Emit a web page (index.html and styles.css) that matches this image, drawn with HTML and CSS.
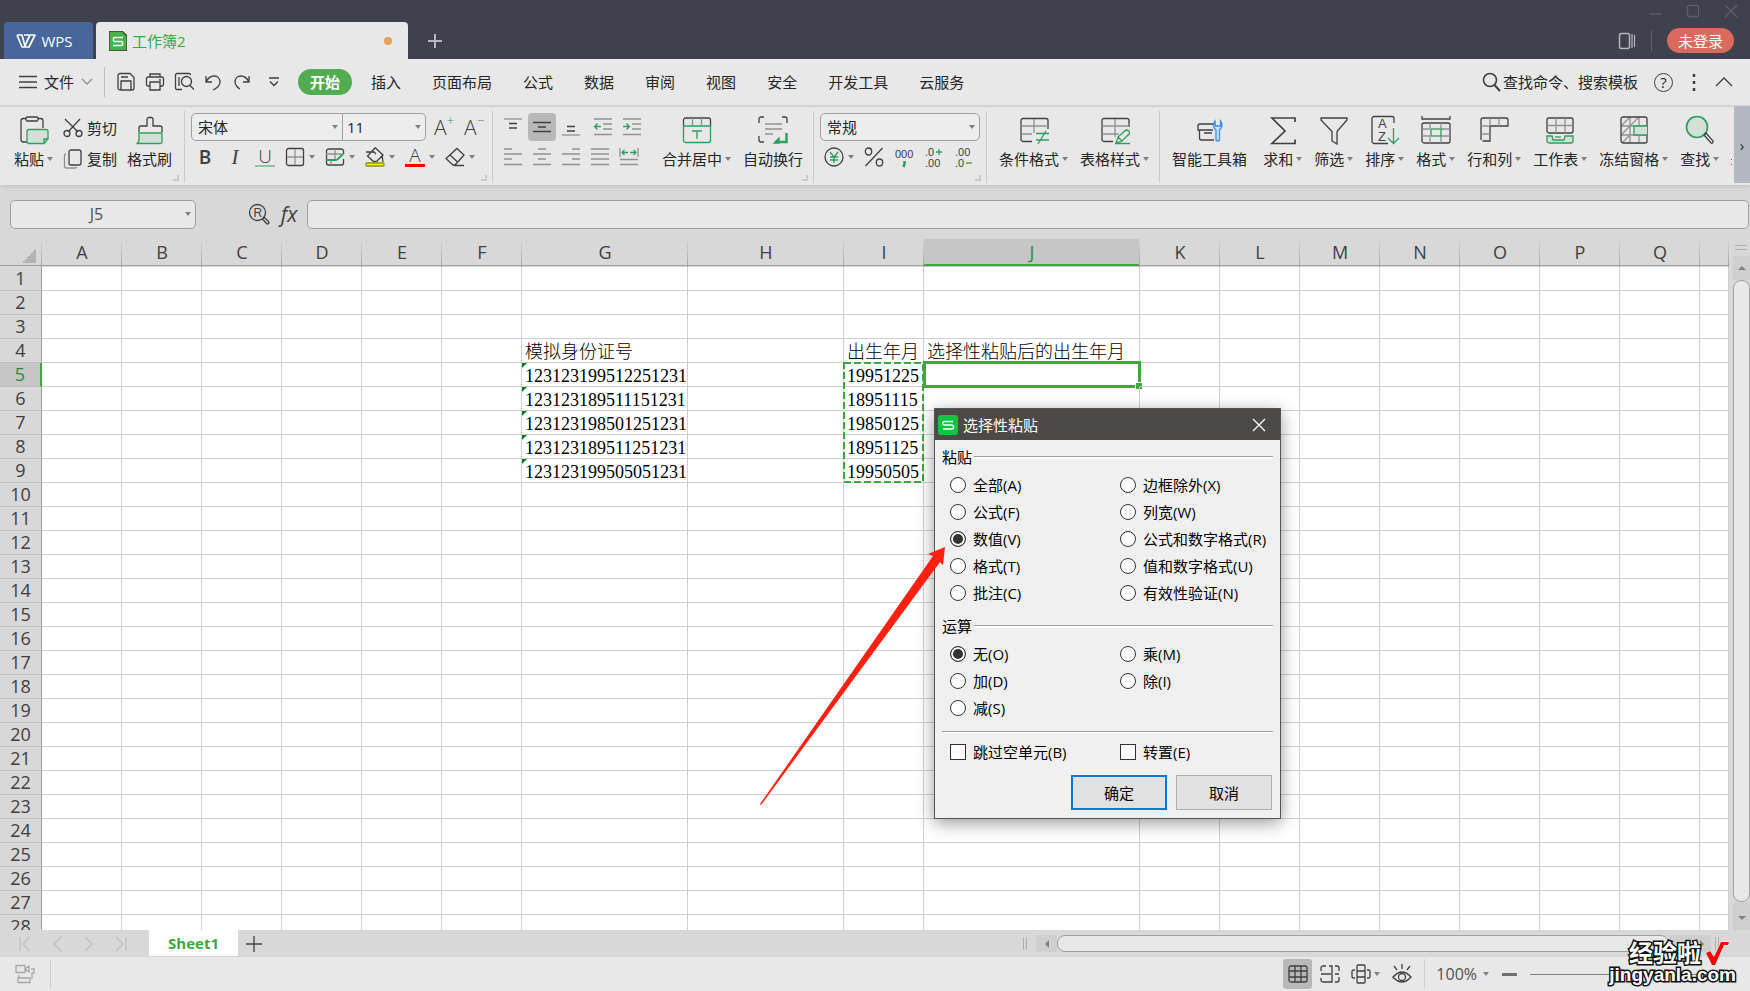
FILE: index.html
```
<!DOCTYPE html>
<html lang="zh-CN">
<head>
    <meta charset="UTF-8">
    <meta name="viewport" content="width=device-width, initial-scale=1.0">
    <title>工作簿2 - WPS</title>
    <link rel="stylesheet" href="styles.css">
</head>
<body>
    <header class="titlebar">
        <button class="wps-tab">
            <svg width="21" height="16" viewBox="0 0 21 16"><path d="M1 2h5l3 11 5-11h5l-6 12H6L1 2M8 2h6l-3 6" fill="none" stroke="#fff" stroke-width="1.700" stroke-linejoin="round"/></svg>
            WPS
        </button>
        <div class="doc-tab">
            <svg width="18" height="20" viewBox="0 0 18 20"><path d="M2 0h11l5 5v13a2 2 0 0 1-2 2H2a2 2 0 0 1-2-2V2a2 2 0 0 1 2-2z" fill="#48b148"/><path d="M14 6.500H5.500a1 1 0 0 0-1 1V9.500a1 1 0 0 0 1 1H12.500a1 1 0 0 1 1 1V13.500a1 1 0 0 1-1 1H4" fill="none" stroke="#fff" stroke-width="1.600"/></svg>
            <span>工作簿2</span>
            <i class="unsaved"></i>
        </div>
        <button class="new-tab" aria-label="新建"><svg width="16" height="16" viewBox="0 0 16 16"><path d="M8 1v14M1 8h14" stroke="#b4b6bc" stroke-width="2"/></svg></button>
        <div class="title-right">
            <div class="window-controls">
                <button aria-label="最小化"><svg width="14" height="14" viewBox="0 0 14 14"><path d="M1 10h12"/></svg></button>
                <button aria-label="最大化"><svg width="14" height="14" viewBox="0 0 14 14"><rect x="1.500" y="1.500" width="11" height="11" rx="1.500"/></svg></button>
                <button aria-label="关闭"><svg width="14" height="14" viewBox="0 0 14 14"><path d="M1 1l12 12M13 1L1 13"/></svg></button>
            </div>
            <div class="account">
                <button aria-label="窗口"><svg width="18" height="18" viewBox="0 0 18 18"><rect x="1.500" y="1.500" width="10" height="15" rx="2" fill="none" stroke="#b4b6bc" stroke-width="1.500"/><path d="M14 2v14M16.500 3v12" stroke="#b4b6bc" stroke-width="1.200"/></svg></button>
                <i class="account-line"></i>
                <button class="login">未登录</button>
            </div>
        </div>
    </header>

    <nav class="menubar">
        <button class="file-menu">
            <svg width="18" height="14" viewBox="0 0 18 14"><path d="M0 1.500h18M0 7h18M0 12.500h18"/></svg>
            文件
            <svg class="muted" width="12" height="8" viewBox="0 0 12 8"><path d="M1 1l5 5 5-5"/></svg>
        </button>
        <div class="quick">
            <button aria-label="保存"><svg width="20" height="20" viewBox="0 0 20 20"><path d="M4 1.500h10l4 4V16a2 2 0 0 1-2 2H4a2 2 0 0 1-2-2V3.500a2 2 0 0 1 2-2zM5 18v-9h10v9M5 5h7"/></svg></button>
            <button aria-label="打印"><svg width="20" height="20" viewBox="0 0 20 20"><path d="M5 5V2h10v3M5 14H3a1.500 1.500 0 0 1-1.500-1.500v-6A1.500 1.500 0 0 1 3 5h14a1.500 1.500 0 0 1 1.500 1.500v6A1.500 1.500 0 0 1 17 14h-2M5 10h10v8H5zM14 8h2"/></svg></button>
            <button aria-label="打印预览"><svg width="20" height="20" viewBox="0 0 20 20"><path d="M8 17.500H3a1.500 1.500 0 0 1-1.500-1.500V3A1.500 1.500 0 0 1 3 1.500h12A1.500 1.500 0 0 1 16.500 3M5 14V5M16 13.500l4 4"/><circle cx="12.500" cy="9.500" r="5"/></svg></button>
            <button aria-label="撤销"><svg width="20" height="20" viewBox="0 0 20 20"><path d="M3 4v6h6M3 10c2-4 5-6 8-6 4 0 6 3 6 6 0 3-3 6-7 8"/></svg></button>
            <button aria-label="恢复"><svg width="20" height="20" viewBox="0 0 20 20"><path d="M17 4v6h-6M17 10c-2-4-5-6-8-6-4 0-6 3-6 6 0 3 3 6 5 7"/></svg></button>
            <button aria-label="更多"><svg width="12" height="10" viewBox="0 0 12 10"><path d="M1 1h10M2 4.500l4 4 4-4"/></svg></button>
        </div>
        <div class="tabs">
            <button class="active">开始</button>
            <button>插入</button>
            <button>页面布局</button>
            <button>公式</button>
            <button>数据</button>
            <button>审阅</button>
            <button>视图</button>
            <button>安全</button>
            <button>开发工具</button>
            <button>云服务</button>
        </div>
        <div class="menu-right">
            <button class="search"><svg width="20" height="20" viewBox="0 0 20 20"><circle cx="9" cy="8" r="6.500" stroke-width="1.600"/><path d="M13.500 13l5.500 6" stroke-width="2"/></svg>查找命令、搜索模板</button>
            <button class="help" aria-label="帮助">?</button>
            <button class="more" aria-label="更多"><svg width="4" height="18" viewBox="0 0 4 18"><path d="M2 1v3M2 8v3M2 15v3" stroke-width="2.500"/></svg></button>
            <button class="collapse" aria-label="收起"><svg width="18" height="10" viewBox="0 0 18 10"><path d="M1 9l8-8 8 8"/></svg></button>
        </div>
    </nav>

    <section class="ribbon">
        <div class="group clipboard">
            <button class="big">
                <svg width="30" height="30" viewBox="0 0 30 30"><path d="M8 27H4.500A2.500 2.500 0 0 1 2 24.500V6a2.500 2.500 0 0 1 2.500-2.500H7M19 3.500h2.500A2.500 2.500 0 0 1 24 6v7"/><rect x="7" y="2" width="12" height="4" rx="1.500"/><path class="green tint" d="M10 14.500h17a2 2 0 0 1 2 2V24l-4 4.500H10a2 2 0 0 1-2-2v-10a2 2 0 0 1 2-2z"/><path class="green" d="M29 24h-4v4"/></svg>
                <span class="caret">粘贴</span>
            </button>
            <div class="stack">
                <button><svg width="20" height="20" viewBox="0 0 20 20"><path d="M2 1l13 13M17 1L5 14"/><circle cx="4" cy="15.500" r="3"/><circle cx="16" cy="15.500" r="3"/></svg>剪切</button>
                <button><svg width="20" height="20" viewBox="0 0 20 20"><rect x="6" y="1" width="12" height="15" rx="2"/><path class="muted" d="M3 4.500a2 2 0 0 0-1.500 2V17a2 2 0 0 0 2 2H12a2 2 0 0 0 2-1"/></svg>复制</button>
            </div>
            <button class="big">
                <svg width="30" height="30" viewBox="0 0 30 30"><path d="M4 17v-4a2 2 0 0 1 2-2h6V4.500a2 2 0 0 1 2-2h2a2 2 0 0 1 2 2V11h7a2 2 0 0 1 2 2v4"/><path class="green tint" d="M4 18h23v9a1.500 1.500 0 0 1-1.500 1.500H1.500Q4 28 4 25z"/></svg>
                <span>格式刷</span>
            </button>
            <i class="corner"></i>
        </div>

        <div class="group font">
            <div class="rows">
                <div class="row">
                    <div class="font-boxes">
                        <label class="combo name"><select aria-label="字体"><option>宋体</option></select></label>
                        <label class="combo size"><select aria-label="字号"><option>11</option></select></label>
                    </div>
                    <button class="glyph grow" aria-label="增大字号">A<sup>+</sup></button>
                    <button class="glyph grow" aria-label="减小字号">A<sup>−</sup></button>
                </div>
                <div class="row tools">
                    <button class="glyph bold">B</button>
                    <button class="glyph italic">I</button>
                    <button class="glyph underline">U</button>
                    <button class="caret" aria-label="边框"><svg width="20" height="20" viewBox="0 0 20 20"><rect x="1.500" y="1.500" width="17" height="17" rx="2"/><path class="muted" d="M10 2v16M2 10h16"/></svg></button>
                    <button class="caret" aria-label="绘图边框"><svg width="20" height="20" viewBox="0 0 20 20"><path d="M18.500 6V4a2 2 0 0 0-2-2h-13a2 2 0 0 0-2 2v12a2 2 0 0 0 2 2h13a2 2 0 0 0 2-2v-4"/><path class="muted" d="M1 7h15M10 2v10M6 14v4"/><path class="green" d="M1 13h10l2-1 6-6" stroke-width="1.800"/></svg></button>
                    <button class="caret" aria-label="填充颜色"><svg width="20" height="20" viewBox="0 0 20 20"><path d="M10 1L2.500 9l6 5.500h3L18 8l-7.500-7zM1 5h8l2 2M17 8l1 7"/><rect x="1" y="16" width="18" height="3" rx="1" fill="#ff0" stroke="#8a8a2a"/></svg></button>
                    <button class="glyph color caret"><span>A</span></button>
                    <button class="caret" aria-label="清除"><svg width="20" height="20" viewBox="0 0 20 20"><path d="M12 1.500l7 6.500-9 10H8l-7-6.500zM5 8l7.500 7M9 18.500h10"/></svg></button>
                </div>
            </div>
            <i class="corner"></i>
        </div>

        <div class="group align">
            <div class="rows">
                <div class="row">
                    <button aria-label="顶端对齐"><svg width="20" height="20" viewBox="0 0 20 20"><path class="muted" d="M1 2h18"/><path d="M6 6.500h8M6 11h8"/></svg></button>
                    <button class="pressed" aria-label="垂直居中"><svg width="20" height="20" viewBox="0 0 20 20"><path d="M1 5.500h18M6 10h8M1 14.500h18"/></svg></button>
                    <button aria-label="底端对齐"><svg width="20" height="20" viewBox="0 0 20 20"><path d="M6 9.500h8M6 14h8"/><path class="muted" d="M1 18h18"/></svg></button>
                    <button class="indent" aria-label="减少缩进"><svg width="20" height="20" viewBox="0 0 20 20"><path class="muted" d="M1 2h18M10 7h9M10 12h9M1 17.500h18"/><path class="green" d="M8 9.500H2M4.500 6.500l-3 3 3 3"/></svg></button>
                    <button aria-label="增加缩进"><svg width="20" height="20" viewBox="0 0 20 20"><path class="muted" d="M1 2h18M10 7h9M10 12h9M1 17.500h18"/><path class="green" d="M1 9.500h6M4.500 6.500l3 3-3 3"/></svg></button>
                </div>
                <div class="row muted">
                    <button aria-label="左对齐"><svg width="20" height="20" viewBox="0 0 20 20"><path d="M1 2h8M1 7h18M1 12h8M1 17.500h18"/></svg></button>
                    <button aria-label="居中"><svg width="20" height="20" viewBox="0 0 20 20"><path d="M6 2h8M1 7h18M6 12h8M1 17.500h18"/></svg></button>
                    <button aria-label="右对齐"><svg width="20" height="20" viewBox="0 0 20 20"><path d="M11 2h8M1 7h18M11 12h8M1 17.500h18"/></svg></button>
                    <button aria-label="两端对齐"><svg width="20" height="20" viewBox="0 0 20 20"><path d="M1 2h18M1 7h18M1 12h18M1 17.500h18"/></svg></button>
                    <button aria-label="分散对齐"><svg width="20" height="20" viewBox="0 0 20 20"><path d="M1 1v9M19 1v9M1 12.500h18M1 17.500h18"/><path class="green" d="M9 5.500H3M5.500 3L3 5.500 5.500 8M11 5.500h6M14.500 3L17 5.500 14.500 8"/></svg></button>
                </div>
            </div>
            <button class="big">
                <svg width="30" height="30" viewBox="0 0 30 30"><path d="M1.500 11V5a2 2 0 0 1 2-2h23a2 2 0 0 1 2 2v6"/><path class="muted" d="M10.500 3v7M19.500 3v7"/><path class="green" d="M1.500 11h27v14.500a2 2 0 0 1-2 2h-23a2 2 0 0 1-2-2zM10 16h10M15 16v8"/></svg>
                <span class="caret">合并居中</span>
            </button>
            <button class="big">
                <svg width="30" height="30" viewBox="0 0 30 30"><path d="M1 8V4a2 2 0 0 1 2-2h3M24 2h3a2 2 0 0 1 2 2v4M1 21v4a2 2 0 0 0 2 2h3"/><path class="muted" d="M7 9h17M7 14h17M7 19h8"/><path class="green" d="M28.500 18v9H18" stroke-width="2.500"/><path class="green fill" d="M21 23v5h-5z"/></svg>
                <span>自动换行</span>
            </button>
            <i class="corner"></i>
        </div>

        <div class="group number">
            <div class="rows">
                <div class="row"><label class="combo format"><select aria-label="数字格式"><option>常规</option></select></label></div>
                <div class="row tools">
                    <button class="caret" aria-label="货币"><svg width="20" height="20" viewBox="0 0 20 20"><circle cx="10" cy="10" r="9"/><path class="green" d="M6 5l4 5 4-5M10 10v6M6 10h8M6 13h8"/></svg></button>
                    <button aria-label="百分比"><svg width="20" height="20" viewBox="0 0 20 20"><ellipse cx="4.500" cy="4.500" rx="3.200" ry="3.500"/><ellipse cx="15.500" cy="15.500" rx="3.200" ry="3.500"/><path d="M18.500 1L1.500 19"/></svg></button>
                    <button aria-label="千位分隔"><svg width="20" height="22" viewBox="0 0 20 22"><text x="1" y="12">000</text><path class="green" d="M10.500 15v3l-1 3" stroke-width="2.500"/></svg></button>
                    <button aria-label="增加小数位"><svg width="20" height="22" viewBox="0 0 20 22"><text x="1" y="10">.0</text><text x="1" y="21">.00</text><path class="green" d="M12 6h6M15 3v6"/></svg></button>
                    <button aria-label="减少小数位"><svg width="20" height="22" viewBox="0 0 20 22"><text x="1" y="10">.00</text><text x="1" y="21">.0</text><path class="green" d="M12 17h6"/></svg></button>
                </div>
            </div>
            <i class="corner"></i>
        </div>

        <div class="group style">
            <button class="big">
                <svg width="30" height="30" viewBox="0 0 30 30"><path d="M13 26.500H4a2 2 0 0 1-2-2V5.500a2 2 0 0 1 2-2h23a2 2 0 0 1 2 2V14"/><path class="muted" d="M2 11h27M15 4v14M2 19h11"/><path class="green" d="M17 18.500h13M17 25h13M27 16l-8 13"/></svg>
                <span class="caret">条件格式</span>
            </button>
            <button class="big">
                <svg width="30" height="30" viewBox="0 0 30 30"><path d="M13 26.500H4a2 2 0 0 1-2-2V5.500a2 2 0 0 1 2-2h23a2 2 0 0 1 2 2V12"/><path class="muted" d="M2 11h27M15 4v18M2 19h17"/><path class="green" d="M15 28.500h15M16 28l2-6 8-7q3 0 4 3l-8 8zM18 22l4 4"/></svg>
                <span class="caret">表格样式</span>
            </button>
        </div>

        <div class="group last">
            <button class="big tool">
                <svg width="30" height="30" viewBox="0 0 30 30"><path d="M18 9H5a2 2 0 0 0-2 2v4h15M4.500 15v8a2 2 0 0 0 2 2H19M9 18h8"/><path class="blue" d="M20 6q-3 4 0 8l1 1v10q1.500 2 3.500 0V15l1-1q3-4 0-8v5h-5z"/></svg>
                <span>智能工具箱</span>
            </button>
            <button class="big"><svg width="30" height="30" viewBox="0 0 30 30"><path d="M27 7V3H4l13 13L4 28.500h23v-4" stroke-width="1.700"/></svg><span class="caret">求和</span></button>
            <button class="big"><svg width="30" height="30" viewBox="0 0 30 30"><path d="M2 3h26v2L18 16.500V29l-5-3v-9.500L2 5z"/></svg><span class="caret">筛选</span></button>
            <button class="big"><svg width="30" height="30" viewBox="0 0 30 30"><path d="M18 28.500H4a2 2 0 0 1-2-2v-23a2 2 0 0 1 2-2h18a2 2 0 0 1 2 2V8"/><text x="8" y="13" class="az">A</text><text x="8" y="26" class="az">Z</text><path class="green" d="M23.500 13v15M18 23l5.500 5.500L29 23"/></svg><span class="caret">排序</span></button>
            <button class="big"><svg width="30" height="30" viewBox="0 0 30 30"><path d="M1 1v3h28V1"/><rect x="1" y="8" width="28" height="20" rx="2"/><path class="muted" d="M1 14h8M1 21h8M20 14h9M20 21h9M9 8v5M20 8v5M9 22v6M20 22v6"/><rect class="green" x="10" y="14" width="10" height="7"/></svg><span class="caret">格式</span></button>
            <button class="big"><svg width="30" height="30" viewBox="0 0 30 30"><path d="M2 25V5a2 2 0 0 1 2-2h23a2 2 0 0 1 2 2v6H11v15H3.500"/><path class="muted" d="M11 3v8M20 3v8M2 11h9M2 19h9"/></svg><span class="caret">行和列</span></button>
            <button class="big"><svg width="30" height="30" viewBox="0 0 30 30"><rect x="2" y="3" width="26" height="15" rx="2"/><path class="muted" d="M2 10.500h26M11 3v15M20 3v15"/><path class="green tint" d="M2 21h5l1 4h11l1-4h8v5a2 2 0 0 1-2 2H4a2 2 0 0 1-2-2z"/><path class="green" d="M10 22h6"/></svg><span class="caret">工作表</span></button>
            <button class="big"><svg width="30" height="30" viewBox="0 0 30 30"><path class="muted" d="M11 2v26M20 2v26M2 11h26M2 20h26M3 10l7-7M12 10l7-7M3 19l7-7M3 28l7-7"/><rect x="2" y="2" width="26" height="26" rx="2"/><path class="green tint" d="M28 11H15v9h13"/></svg><span class="caret">冻结窗格</span></button>
            <button class="big"><svg width="30" height="30" viewBox="0 0 30 30"><circle class="green tint" cx="12" cy="12" r="10.500" stroke-width="1.700"/><path d="M19 20l2-2 7 8a1.500 1.500 0 0 1-2 2z"/></svg><span class="caret">查找</span></button>
        </div>
        <i class="cut-label"></i>
        <button class="scroll-right" aria-label="更多">›</button>
    </section>

    <section class="formula-bar">
        <label class="combo cell-name"><input type="text" value="J5" aria-label="名称框"></label>
        <button class="lookup" aria-label="查找"><svg width="22" height="22" viewBox="0 0 22 22"><circle cx="9.500" cy="9.500" r="8"/><text x="5.500" y="14" class="reg">R</text><path d="M14.500 16l2-1.500 4 4a1.200 1.200 0 0 1-2 2z"/></svg></button>
        <button class="fx">fx</button>
        <input class="formula" type="text" aria-label="编辑栏">
    </section>

    <main class="sheet">
        <div class="grid">
            <table>
                <colgroup>
                    <col class="c-head"><col><col><col><col><col><col><col class="c-g"><col class="c-h"><col><col class="c-j"><col><col><col><col><col><col><col><col class="c-rest">
                </colgroup>
                <thead><tr id="columns"></tr></thead>
                <tbody id="rows"></tbody>
            </table>
        </div>
        <div class="vscroll">
            <i class="split"></i>
            <button class="up" aria-label="向上"></button>
            <div class="thumb"></div>
            <button class="down" aria-label="向下"></button>
        </div>

        <svg class="arrow" width="188" height="260" viewBox="0 0 188 260"><path d="M1 257L174 9l-5-2 17-7-2 18-3-3L2 258z" fill="#ff2010"/></svg>

        <form class="dialog">
            <div class="dialog-title">
                <svg width="20" height="20" viewBox="0 0 20 20"><rect width="20" height="20" rx="3" fill="#0fc542"/><path d="M15 6.500H6.500a1.500 1.500 0 0 0 0 3.500H13.500a1.500 1.500 0 0 1 0 4H5" fill="none" stroke="#fff" stroke-width="1.500"/></svg>
                <h1>选择性粘贴</h1>
                <button type="button" aria-label="关闭"><svg width="14" height="14" viewBox="0 0 14 14"><path d="M1 1l12 12M13 1L1 13" stroke="#fff" stroke-width="1.300"/></svg></button>
            </div>
            <div class="dialog-body">
                <h2>粘贴</h2>
                <div class="options">
                    <label><input type="radio" name="paste">全部(A)</label>
                    <label><input type="radio" name="paste">边框除外(X)</label>
                    <label><input type="radio" name="paste">公式(F)</label>
                    <label><input type="radio" name="paste">列宽(W)</label>
                    <label><input type="radio" name="paste" checked>数值(V)</label>
                    <label><input type="radio" name="paste">公式和数字格式(R)</label>
                    <label><input type="radio" name="paste">格式(T)</label>
                    <label><input type="radio" name="paste">值和数字格式(U)</label>
                    <label><input type="radio" name="paste">批注(C)</label>
                    <label><input type="radio" name="paste">有效性验证(N)</label>
                </div>
                <h2>运算</h2>
                <div class="options">
                    <label><input type="radio" name="op" checked>无(O)</label>
                    <label><input type="radio" name="op">乘(M)</label>
                    <label><input type="radio" name="op">加(D)</label>
                    <label><input type="radio" name="op">除(I)</label>
                    <label><input type="radio" name="op">减(S)</label>
                </div>
                <hr>
                <div class="options">
                    <label><input type="checkbox">跳过空单元(B)</label>
                    <label><input type="checkbox">转置(E)</label>
                </div>
                <div class="dialog-buttons">
                    <button type="button" class="ok">确定</button>
                    <button type="button">取消</button>
                </div>
            </div>
        </form>
    </main>

    <section class="sheet-bar">
        <div class="sheet-nav">
            <button aria-label="第一个"><svg width="14" height="16" viewBox="0 0 14 16"><path d="M2 1v14M12 1L5 8l7 7"/></svg></button>
            <button aria-label="上一个"><svg width="14" height="16" viewBox="0 0 14 16"><path d="M11 1L4 8l7 7"/></svg></button>
            <button aria-label="下一个"><svg width="14" height="16" viewBox="0 0 14 16"><path d="M3 1l7 7-7 7"/></svg></button>
            <button aria-label="最后一个"><svg width="14" height="16" viewBox="0 0 14 16"><path d="M2 1l7 7-7 7M12 1v14"/></svg></button>
        </div>
        <button class="sheet-tab">Sheet1</button>
        <button class="add-sheet" aria-label="新建工作表"><svg width="18" height="18" viewBox="0 0 18 18"><path d="M9 1v16M1 9h16"/></svg></button>
        <div class="hscroll">
            <i class="split"></i>
            <button class="left" aria-label="向左"></button>
            <div class="thumb"></div>
            <button class="right" aria-label="向右"></button>
            <i class="split"></i>
        </div>
    </section>

    <footer class="status">
        <button class="record" aria-label="录制"><svg width="22" height="20" viewBox="0 0 22 20"><path d="M2 1.500h9v7H2zM11 5l4-3v6zM4 14h12v4.500H4zM5 14v-3M17 5h3v4h-2v6"/></svg></button>
        <div class="views">
            <button class="pressed" aria-label="普通视图"><svg width="20" height="20" viewBox="0 0 20 20"><rect x="1" y="2" width="18" height="16" rx="2"/><path d="M7 2v16M13 2v16M1 7h18M1 13h18"/></svg></button>
            <button aria-label="分页预览"><svg width="20" height="20" viewBox="0 0 20 20"><path d="M1 7V4a2 2 0 0 1 2-2h3M9 2h3v16H3a2 2 0 0 1-2-2v-2M1 10h10M15 2h2a2 2 0 0 1 2 2v3M15 10h4M15 18h2a2 2 0 0 0 2-2v-3"/></svg></button>
            <button class="caret" aria-label="阅读模式"><svg width="20" height="20" viewBox="0 0 20 20"><rect x="6" y="1" width="8" height="18" rx="1"/><path d="M4 6H2.500A1.500 1.500 0 0 0 1 7.500v5A1.500 1.500 0 0 0 2.500 14H4M16 6h1.500A1.500 1.500 0 0 1 19 7.500v5a1.500 1.500 0 0 1-1.500 1.500H16M6 7h8M6 13h8"/></svg></button>
            <button aria-label="护眼模式"><svg width="20" height="20" viewBox="0 0 20 20"><path d="M1 13q9-10 18 0-9 10-18 0zM10 0v5M2 2l3 4M18 2l-3 4"/><circle cx="10" cy="13" r="3.500"/></svg></button>
        </div>
        <button class="zoom-value caret">100%</button>
        <button class="zoom-out" aria-label="缩小"></button>
        <input class="zoom-range" type="range" min="0" max="100" value="50" aria-label="缩放">
        <button class="zoom-in" aria-label="放大"></button>
    </footer>

    <div class="watermark">
        <div class="mark-name">经验啦<svg width="24" height="24" viewBox="0 0 24 24"><path d="M1 12l4-2 4 6L16 1h8l-1 3h-4L10 24H7z"/></svg></div>
        <div class="mark-url">jingyanla.com</div>
    </div>

    <script src="script.js"></script>
</body>
</html>
```
FILE: styles.css
```
:root {
    --bar: #e8e8e8;
    --frame: #d8d8d8;
    --line: #d0d0d0;
    --edge: #a0a0a0;
    --ink: #404040;
    --green: #2e9e5e;
    --accent: #3fa740;
    --ui: "Open Sans", "Noto Sans CJK SC", sans-serif;
}

* {
    box-sizing: border-box;
}

body {
    margin: 0;
    height: 100vh;
    display: flex;
    flex-direction: column;
    overflow: hidden;
    background: var(--frame);
    color: #262626;
    font: 15px/20px var(--ui);
}

button, input, select {
    margin: 0;
    padding: 0;
    border: 0;
    background: none;
    color: inherit;
    font: inherit;
}

button {
    display: flex;
    align-items: center;
    justify-content: center;
    white-space: nowrap;
}

svg {
    flex: none;
    display: block;
    fill: none;
    stroke: var(--ink);
    stroke-width: 1.3;
}

svg text {
    fill: var(--ink);
    stroke: none;
    font: 11px/11px "Liberation Sans", sans-serif;
}

svg .az { font-size: 13px; }
svg .reg { font-size: 12px; }

.muted, .muted svg { stroke: #919191; }
svg .green { stroke: var(--green); }
svg .tint { fill: #d3e0d8; }
svg .fill { fill: var(--green); }
svg .blue { stroke: #3a8fe6; fill: #cfe2f5; }

/* small drop-down triangle after a control */
.caret::after, .combo::after {
    content: "";
    display: inline-block;
    flex: none;
    border: 3px solid transparent;
    border-top: 4px solid #808080;
    border-bottom: 0;
    margin-left: 3px;
    vertical-align: 4px;
}

/* title bar */
.titlebar {
    flex: none;
    height: 59px;
    display: flex;
    align-items: flex-end;
    padding-left: 4px;
    background: #3f424e;
}

.wps-tab {
    width: 89px;
    height: 37px;
    gap: 4px;
    padding-right: 8px;
    border-radius: 4px 4px 0 0;
    background: #486699;
    color: #fff;
}

.doc-tab {
    width: 312px;
    height: 37px;
    display: flex;
    align-items: center;
    gap: 5px;
    margin-left: 3px;
    padding: 0 16px 0 13px;
    border-radius: 4px 4px 0 0;
    background: var(--bar);
    color: #3fa740;
}

.unsaved {
    width: 8px;
    height: 8px;
    margin-left: auto;
    border-radius: 50%;
    background: #e8a055;
}

.new-tab {
    height: 37px;
    margin-left: 19px;
}

.title-right {
    margin-left: auto;
    padding-right: 12px;
}

.window-controls {
    display: flex;
    justify-content: flex-end;
    gap: 24px;
    height: 22px;
}

.window-controls svg { stroke: #5c5f6b; }

.account {
    display: flex;
    align-items: center;
    height: 37px;
    padding-right: 4px;
}

.account-line {
    width: 1px;
    height: 22px;
    margin: 0 15px;
    background: #5c5f6b;
}

.login {
    width: 67px;
    height: 25px;
    border-radius: 13px;
    background: #d96b5e;
    color: #fff;
}

/* menu bar */
.menubar {
    flex: none;
    height: 48px;
    display: flex;
    align-items: center;
    padding: 0 17px 0 19px;
    background: var(--bar);
    border-bottom: 2px solid var(--frame);
}

.file-menu {
    gap: 7px;
    height: 30px;
    padding-right: 11px;
    border-right: 1px solid #c0c0c0;
}

.quick {
    display: flex;
    gap: 9px;
    margin-left: 11px;
}

.quick button:last-child {
    margin-left: 7px;
}

.tabs {
    display: flex;
    gap: 7px;
    margin-left: 18px;
}

.tabs button {
    height: 26px;
    padding: 0 12px;
    border-radius: 13px;
}

.tabs .active {
    background: #52ac52;
    color: #fff;
    font-weight: bold;
}

.menu-right {
    display: flex;
    align-items: center;
    margin-left: auto;
}

.search { gap: 2px; }

.help {
    width: 19px;
    height: 19px;
    margin: 0 19px 0 16px;
    border: 1px solid var(--ink);
    border-radius: 50%;
}

.collapse {
    margin-left: 19px;
}

/* ribbon */
.ribbon {
    flex: none;
    position: relative;
    height: 78px;
    display: flex;
    align-items: flex-start;
    padding-top: 4px;
    background: var(--bar);
    box-shadow: 0 1px 4px #bcbcbc;
}

.group {
    position: relative;
    height: 72px;
    display: flex;
    align-items: flex-start;
    padding: 2px 6px;
    border-right: 1px solid #cacaca;
}

.clipboard { padding-left: 8px; }
.align, .style { padding-right: 4px; }

.last {
    flex: 1;
    min-width: 0;
    border: 0;
    overflow: hidden;
}

.big {
    flex-direction: column;
    gap: 4px;
    padding: 2px 6px 0;
}

.tool { margin-right: 4px; }

.stack, .rows {
    display: flex;
    flex-direction: column;
    gap: 2px;
}

.stack {
    margin: 0 4px;
}

.stack button {
    height: 29px;
    gap: 4px;
}

.row {
    display: flex;
    align-items: center;
    height: 28px;
}

.tools {
    gap: 10px;
    padding-left: 4px;
}

.tools .caret::after {
    margin-left: 4px;
}

.corner {
    position: absolute;
    right: 5px;
    bottom: 2px;
    width: 6px;
    height: 6px;
    border: solid #cacaca;
    border-width: 0 2px 2px 0;
}

.combo {
    height: 28px;
    display: flex;
    align-items: center;
    padding: 0 4px 0 6px;
    border: 1px solid var(--edge);
    border-radius: 5px;
    background: #ededed;
}

.combo select, .combo input {
    flex: 1;
    min-width: 0;
    appearance: none;
    outline: 0;
}

.font-boxes { display: flex; }
.name { width: 152px; border-radius: 5px 0 0 5px; }
.size { width: 83px; padding-left: 4px; border-left: 0; border-radius: 0 5px 5px 0; }
.format { width: 160px; }

.glyph {
    width: 20px;
    height: 24px;
    font-size: 19px;
    font-weight: 300;
    color: #404040;
}

.glyph.caret { width: auto; }
.bold { font-weight: 600; }
.italic { font-family: "Liberation Serif", serif; font-style: italic; font-size: 21px; }

.underline {
    height: 20px;
    border-bottom: 2px solid #8cc5a5;
}

.color span {
    width: 20px;
    height: 20px;
    line-height: 16px;
    border-bottom: 3px solid #f00;
}

.grow {
    width: 24px;
    margin-left: 6px;
    font-size: 21px;
}

.grow sup {
    align-self: flex-start;
    font-size: 13px;
    line-height: 10px;
    color: var(--green);
}

.align .row { gap: 1px; }

.align .row button {
    width: 28px;
    height: 28px;
    border-radius: 4px;
}

.align .row .indent { margin-left: 3px; }
.align .rows { margin-right: 10px; }

.align .pressed, .views .pressed {
    background: #b8b8b8;
}

/* first stroke of the label that runs under the scroll button */
.cut-label {
    width: 1px;
    height: 6px;
    margin: 48px 2px 0 0;
    border: solid #606060;
    border-width: 1px 0;
}

.scroll-right {
    width: 16px;
    height: 77px;
    margin-top: -5px;
    background: #b4b8c2;
}

/* formula bar */
.formula-bar {
    flex: none;
    height: 54px;
    display: flex;
    align-items: center;
    padding: 4px 1px 0 10px;
}

.cell-name {
    width: 186px;
    height: 29px;
    padding-left: 0;
    background: var(--bar);
}

.cell-name input {
    text-align: center;
    font-size: 16px;
    color: #505050;
}

.lookup { margin-left: 52px; }

.fx {
    width: 24px;
    margin: 0 6px 0 7px;
    font: italic 21px/24px "Open Sans", sans-serif;
    color: var(--ink);
}

.formula {
    flex: 1;
    height: 29px;
    padding: 0 8px;
    border: 1px solid var(--edge);
    border-radius: 5px;
    background: var(--bar);
}

/* grid */
.sheet {
    position: relative;
    flex: 1;
    min-height: 0;
    display: flex;
}

.grid {
    flex: 1;
    min-width: 0;
    overflow: hidden;
    background: #fff;
}

table {
    width: 100%;
    table-layout: fixed;
    border-collapse: separate;
    border-spacing: 0;
}

col { width: 80px; }
.c-head { width: 42px; }
.c-g { width: 166px; }
.c-h { width: 156px; }
.c-j { width: 216px; }
.c-rest { width: auto; }

th {
    height: 24px;
    padding: 0;
    background: var(--frame);
    border: solid var(--edge);
    border-width: 0 1px 1px 0;
    color: var(--ink);
    font: 18px/23px var(--ui);
}

thead th {
    height: 28px;
    padding-left: 1px;
    border-image: linear-gradient(var(--frame), var(--edge)) 1;
    border-image-width: 0 1px 0 0;
    box-shadow: inset 0 -1px var(--edge);
}

tbody th {
    border-bottom-color: #c0c0c0;
}

thead th.current {
    background: #c6c6c6;
    color: #2f8a38;
    box-shadow: inset 0 -2px var(--accent);
}

tbody th.current {
    background: #c6c6c6;
    color: #2f8a38;
    border-right: 2px solid var(--accent);
}

.select-all::after {
    content: "";
    display: block;
    width: 14px;
    height: 14px;
    margin: 6px 0 0 21px;
    background: linear-gradient(135deg, transparent 50%, #b4b4b4 50%);
}

td {
    position: relative;
    height: 24px;
    padding: 4px 0 0 3px;
    border: solid var(--line);
    border-width: 0 1px 1px 0;
    color: #000;
    font: 18px/19px "Liberation Serif", "Noto Sans CJK SC", serif;
    white-space: nowrap;
}

td.title {
    font-weight: 300;
}

/* number kept as text */
td.flag::before {
    content: "";
    position: absolute;
    left: 0;
    top: 0;
    border: solid transparent;
    border-width: 0 5px 5px 0;
    border-left-color: #0a7a0a;
    border-top: 5px solid #0a7a0a;
    border-bottom: 0;
}

.marquee {
    position: absolute;
    z-index: 1;
    left: -1px;
    top: -1px;
    width: 81px;
    height: 121px;
    stroke: var(--accent);
    stroke-width: 2;
    stroke-dasharray: 7 3;
}

.selection {
    position: absolute;
    inset: -2px -2px -2px -1px;
    border: 3px solid var(--accent);
}

.selection::after {
    content: "";
    position: absolute;
    right: -4px;
    bottom: -4px;
    width: 6px;
    height: 6px;
    background: var(--accent);
    border: solid #fff;
    border-width: 1px 0 0 1px;
}

/* scroll bars */
.thumb {
    flex: 1;
    border: 1px solid var(--edge);
    border-radius: 8px;
    background: var(--bar);
}

.vscroll {
    width: 21px;
    display: flex;
    flex-direction: column;
    padding: 6px 0 0 4px;
}

.vscroll .split {
    height: 5px;
    margin: 0 3px 6px 2px;
    border: solid #b0b0b0;
    border-width: 1px 0;
}

.up, .down { height: 24px; background: #cfcfcf; }
.down { height: 28px; padding-top: 4px; }
.left, .right { width: 21px; height: 17px; background: #cfcfcf; }

.up::after, .down::after, .left::after, .right::after {
    content: "";
    border: 4px solid transparent;
}

.up::after { border-top: 0; border-bottom-color: #808080; }
.down::after { border-bottom: 0; border-top-color: #808080; }
.left::after { border-left: 0; border-right-color: #808080; }
.right::after { border-right: 0; border-left-color: #808080; }

/* pointer drawn over the sheet */
.arrow {
    position: absolute;
    z-index: 3;
    left: 759px;
    top: 308px;
    stroke: none;
}

/* paste special dialog */
.dialog {
    position: absolute;
    z-index: 2;
    left: 934px;
    top: 169px;
    width: 347px;
    border: 1px solid #555;
    background: #f0f0f0;
    box-shadow: 0 4px 16px rgba(0, 0, 0, 0.4);
    color: #000;
}

.dialog-title {
    height: 31px;
    display: flex;
    align-items: center;
    gap: 5px;
    padding: 0 14px 0 3px;
    background: #4c4a48;
    color: #fff;
}

.dialog-title button {
    margin-left: auto;
}

.dialog-title svg { stroke: none; }

h1, h2 {
    margin: 0;
    font: inherit;
}

.dialog-body {
    padding: 7px 7px 8px;
}

h2 {
    display: flex;
    align-items: center;
    gap: 2px;
}

h2::after {
    content: "";
    flex: 1;
}

h2::after, hr {
    height: 2px;
    border: 0;
    border-top: 1px solid var(--edge);
    background: #fff;
}

hr {
    margin: 10px 0 1px;
}

.options {
    display: grid;
    grid-template-columns: 170px 1fr;
    padding: 4px 0 0 8px;
}

.options + h2 { margin-top: 10px; }

.options label {
    height: 27px;
    display: flex;
    align-items: center;
    gap: 7px;
    white-space: nowrap;
}

.options input {
    appearance: none;
    width: 16px;
    height: 16px;
    border: 1px solid #333;
    background: #fff;
}

.options input[type="radio"] {
    border-radius: 50%;
}

.options input:checked {
    background: #333;
    box-shadow: inset 0 0 0 2px #fff;
}

.dialog-buttons {
    display: flex;
    justify-content: flex-end;
    gap: 9px;
    margin: 10px 1px 0 0;
}

.dialog-buttons button {
    width: 96px;
    height: 35px;
    border: 1px solid #adadad;
    background: #e1e1e1;
}

.dialog-buttons .ok {
    border: 2px solid #0078d7;
}

/* sheet tabs */
.sheet-bar {
    flex: none;
    height: 27px;
    display: flex;
    align-items: center;
}

.sheet-nav {
    display: flex;
    gap: 18px;
    padding: 0 21px 0 18px;
}

.sheet-nav svg { stroke: #c0c0c0; }

.sheet-tab {
    width: 89px;
    height: 26px;
    margin-bottom: 1px;
    background: #fff;
    color: var(--accent);
    font-weight: bold;
}

.add-sheet { margin-left: 7px; }

.hscroll {
    width: 704px;
    height: 17px;
    display: flex;
    margin: 0 27px 0 auto;
}

.hscroll .split {
    width: 4px;
    margin: 2px 4px;
    border: solid #b0b0b0;
    border-width: 0 1px;
}

.hscroll .left { margin-left: 5px; }
.hscroll .right { width: 42px; padding-left: 24px; }

/* status bar */
.status {
    flex: none;
    height: 34px;
    display: flex;
    align-items: center;
    padding: 0 22px 0 14px;
    background: var(--bar);
}

.record {
    height: 30px;
    padding-right: 14px;
    border-right: 1px solid var(--line);
}

.record svg { stroke: #a8a8a8; }

.views {
    display: flex;
    align-items: center;
    gap: 3px;
    margin-left: auto;
    padding-right: 8px;
    border-right: 1px solid var(--line);
}

.views button {
    min-width: 29px;
    height: 30px;
    padding: 0 4px;
    border-radius: 3px;
}

.zoom-value {
    margin-left: 11px;
    font-size: 16px;
    color: #505050;
}

.zoom-value::after { margin-left: 6px; }

.zoom-out, .zoom-in {
    width: 15px;
    height: 3px;
    margin: 0 13px;
    background: #707070;
}

.zoom-in { margin: 0 0 0 9px; }

.zoom-range {
    width: 174px;
    height: 16px;
    appearance: none;
    background: linear-gradient(#808080, #808080) center / 100% 1px no-repeat;
}

.zoom-range::-webkit-slider-thumb {
    appearance: none;
    width: 14px;
    height: 14px;
    border: 1px solid #808080;
    border-radius: 50%;
    background: var(--bar);
}

.watermark {
    position: absolute;
    z-index: 4;
    right: 14px;
    bottom: 6px;
    color: #fff;
    font-weight: bold;
    -webkit-text-stroke: 3px #111;
    paint-order: stroke fill;
}

.mark-name {
    display: flex;
    justify-content: flex-end;
    gap: 4px;
    padding-right: 7px;
    font-size: 24px;
    line-height: 24px;
}

.mark-name svg {
    fill: #f00;
    stroke: #fff;
    stroke-width: 1;
}

.mark-url {
    font: bold 19px/20px "Liberation Sans", sans-serif;
}
```
FILE: script.js
```
const letters = 'ABCDEFGHIJKLMNOPQ'.split('');
const rowCount = 28;

const ids = ['123123199512251231', '123123189511151231', '123123198501251231', '123123189511251231', '123123199505051231'];
const births = ['19951225', '18951115', '19850125', '18951125', '19950505'];

const cells = { G4: '模拟身份证号', I4: '出生年月', J4: '选择性粘贴后的出生年月' };
ids.forEach((id, i) => cells['G' + (5 + i)] = id);
births.forEach((date, i) => cells['I' + (5 + i)] = date);

document.getElementById('columns').innerHTML =
    '<th class="select-all"></th>' +
    letters.map(l => `<th${l === 'J' ? ' class="current"' : ''}>${l}</th>`).join('') +
    '<th></th>';

let html = '';
for (let r = 1; r <= rowCount; r++) {
    html += `<tr><th${r === 5 ? ' class="current"' : ''}>${r}</th>`;
    for (const l of letters) {
        const key = l + r;
        let cls = '';
        if (r === 4 && cells[key]) cls = 'title';
        if (l === 'G' && r > 4 && cells[key]) cls = 'flag';
        let content = cells[key] || '';
        if (key === 'I5') content += '<svg class="marquee"><rect x="1" y="1" width="79" height="119"/></svg>';
        if (key === 'J5') content = '<div class="selection"></div>';
        html += `<td class="${cls}">${content}</td>`;
    }
    html += '<td></td></tr>';
}
document.getElementById('rows').innerHTML = html;
```
